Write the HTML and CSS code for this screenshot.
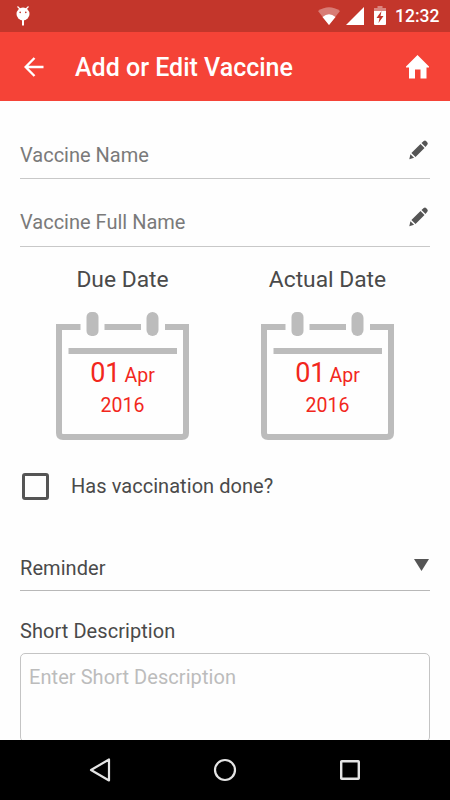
FILE: index.html
```html
<!DOCTYPE html>
<html lang="en">
<head>
<meta charset="utf-8">
<title>Add or Edit Vaccine</title>
<link rel="stylesheet" href="styles.css">
</head>
<body>
<div class="screen">
  <div class="status">
    <svg class="bug" width="14" height="20" viewBox="0 0 14 20" fill="#fff"><path d="M1.500.5 4 3M12.500.5 10 3" stroke="#fff" stroke-width="1.200"/><circle cx="7" cy="8" r="6.500"/><path d="M6 14h2v5.500H6z"/><circle cx="4.200" cy="6.400" r=".8" fill="#c3362b"/><circle cx="9.800" cy="6.400" r=".8" fill="#c3362b"/></svg>
    <svg class="wifi" width="22" height="18" viewBox="0 0 22 18" fill="#fff"><path opacity=".35" d="M0 4Q11-3.500 22 4L11 18Z"/><path d="M4.500 10Q11 4.500 17.500 10L11 18Z"/></svg>
    <svg class="signal" width="18" height="18" viewBox="0 0 18 18" fill="#fff"><path d="M18 0V18H0Z"/></svg>
    <svg class="battery" width="12" height="19" viewBox="0 0 12 19" fill="#fff"><path opacity=".4" d="M3.500 0h5v2H12v3H0V2h3.500z"/><path d="M0 5h12v13q0 1-1 1H1q-1 0-1-1z"/><path d="m7.500 5-5 7h3l-1 5 5-7h-3z" fill="#c3362b"/></svg>
    <span class="clock">12:32</span>
  </div>
  <header class="bar">
    <svg class="back" width="20" height="20" viewBox="0 0 20 20" fill="none" stroke="#fff" stroke-width="2.400"><path d="M19.500 10H2M10.500 1 1.600 10l8.900 9"/></svg>
    <h1 class="title">Add or Edit Vaccine</h1>
    <svg class="home" width="24" height="24" viewBox="0 0 24 24" fill="#fff"><path d="M11.500 0 23 11.500V12.500H20.500V23.500H14.500V14.500H9V23.500H3V12.500H0V11.500Z"/></svg>
  </header>
  <main class="form">
    <div class="field first">
      <span class="label">Vaccine Name</span>
      <svg class="pencil" width="20" height="20" viewBox="0 0 20 20" fill="#555"><path d="M1.300 19.200 2.400 14.300 6.100 17.800ZM3.400 13.100 12.500 4 16.500 8 7.500 17ZM13.500 3 15.700 1.100Q17 0 18.300 1.200L19.200 2.200Q20.300 3.500 19.200 4.800L17.500 6.900Z"/></svg>
    </div>
    <div class="field second">
      <span class="label">Vaccine Full Name</span>
      <svg class="pencil" width="20" height="20" viewBox="0 0 20 20" fill="#555"><path d="M1.300 19.200 2.400 14.300 6.100 17.800ZM3.400 13.100 12.500 4 16.500 8 7.500 17ZM13.500 3 15.700 1.100Q17 0 18.300 1.200L19.200 2.200Q20.300 3.500 19.200 4.800L17.500 6.900Z"/></svg>
    </div>
    <div class="dates">
      <section class="date">
        <h2 class="date-title due">Due Date</h2>
        <div class="calendar">
          <svg class="frame" width="133" height="129" viewBox="0 0 133 129" fill="none" stroke="#bcbcbc" stroke-width="6"><path d="M24.500 16H3V122q0 4 4 4H126q4 0 4-4V16H109M48.500 16H85M12.500 40H121"/><rect x="30.500" y="1" width="12" height="24" rx="5" fill="#bcbcbc" stroke="none"/><rect x="90.500" y="1" width="12" height="24" rx="6" fill="#bcbcbc" stroke="none"/></svg>
          <div class="day"><span class="num">01</span><span class="month">Apr</span></div>
          <div class="year">2016</div>
        </div>
      </section>
      <section class="date">
        <h2 class="date-title actual">Actual Date</h2>
        <div class="calendar">
          <svg class="frame" width="133" height="129" viewBox="0 0 133 129" fill="none" stroke="#bcbcbc" stroke-width="6"><path d="M24.500 16H3V122q0 4 4 4H126q4 0 4-4V16H109M48.500 16H85M12.500 40H121"/><rect x="30.500" y="1" width="12" height="24" rx="5" fill="#bcbcbc" stroke="none"/><rect x="90.500" y="1" width="12" height="24" rx="6" fill="#bcbcbc" stroke="none"/></svg>
          <div class="day"><span class="num">01</span><span class="month">Apr</span></div>
          <div class="year">2016</div>
        </div>
      </section>
    </div>
    <div class="check">
      <span class="box"></span>
      <span class="check-label">Has vaccination done?</span>
    </div>
    <div class="reminder">
      <span class="reminder-label">Reminder</span>
      <svg class="caret" width="15" height="12" viewBox="0 0 15 12" fill="#555"><path d="M0 0h15L7.500 12z"/></svg>
    </div>
    <div class="desc-label"><span class="desc-text">Short Description</span></div>
    <div class="area"><span class="placeholder">Enter Short Description</span></div>
  </main>
  <nav class="nav">
    <svg width="22" height="26" viewBox="0 0 22 26" fill="none" stroke="#e4e4e4" stroke-width="2.200" stroke-linejoin="round"><path d="M20 2.500V23.500L2 13Z"/></svg>
    <svg width="24" height="24" viewBox="0 0 24 24" fill="none" stroke="#e4e4e4" stroke-width="2.200"><circle cx="12" cy="12" r="10"/></svg>
    <svg width="20" height="20" viewBox="0 0 20 20" fill="none" stroke="#e4e4e4" stroke-width="2.400"><rect x="1.200" y="1.200" width="17.600" height="17.600" rx=".5"/></svg>
  </nav>
</div>
</body>
</html>
```

FILE: styles.css
```css
* { box-sizing: border-box; }
body { margin: 0; font-family: Roboto, "Liberation Sans", sans-serif; font-size: 20px; color: #4a4a4a; }
h1, h2 { margin: 0; font-weight: 400; }
svg { display: block; flex: none; }
span, h1, h2 { white-space: nowrap; }
.screen { width: 450px; height: 800px; display: flex; flex-direction: column; overflow: hidden; background: #fefefe; }
.status { height: 32px; flex: none; background: #c3362b; display: flex; align-items: flex-start; padding: 6px 10px 0 16px; }
.wifi { margin: 1px 0 0 288px; }
.signal { margin: 1px 0 0 6px; }
.battery { margin-left: 10px; }
.clock { margin-left: 9px; font-size: 17.500px; line-height: 21px; font-weight: 500; color: #fff; }
.bar { height: 69px; flex: none; background: #f54337; display: flex; align-items: center; padding: 1px 20px 0 24px; }
.title { flex: 1; margin: 1px 0 0 31px; font-size: 25px; line-height: 30px; font-weight: 500; color: #fff; }
.form { flex: 1; min-height: 0; overflow: hidden; padding: 0 20px; display: flex; flex-direction: column; }
.field { flex: none; display: flex; justify-content: space-between; align-items: flex-end; border-bottom: 1px solid #c8c8c8; color: #7a7a7a; line-height: 24px; }
.first { height: 78px; padding-bottom: 11px; }
.second { height: 68px; padding-bottom: 12px; }
.pencil { margin: 0 2px 7px 0; }
.dates { flex: none; display: flex; gap: 0; height: 193px; }
.date { width: 205px; padding-top: 19px; display: flex; flex-direction: column; align-items: center; }
.date-title { font-size: 22.800px; line-height: 28px; }
.calendar { width: 133px; height: 129px; margin-top: 17px; display: grid; }
.frame { grid-area: 1 / 1; }
.day, .year { grid-area: 1 / 1; justify-self: center; align-self: start; color: #f2271c; line-height: 28px; }
.day { margin-top: 48px; display: flex; align-items: baseline; gap: 4px; }
.num { font-size: 27px; }
.month { font-size: 19.500px; }
.year { margin-top: 81px; font-size: 19.500px; }
.check { height: 94px; flex: none; display: flex; align-items: center; gap: 22px; padding-left: 2px; }
.check-label { margin-top: -2px; letter-spacing: .05px; }
.box { width: 27px; height: 27px; margin-top: -1px; border: 3px solid #555; border-radius: 3px; }
.reminder { height: 57px; flex: none; display: flex; justify-content: space-between; align-items: flex-end; padding: 0 1px 10px 0; border-bottom: 1px solid #b8b8b8; line-height: 24px; }
.reminder-label, .desc-text { letter-spacing: .06px; }
.caret { margin-bottom: 9px; }
.desc-label { height: 62px; flex: none; padding-top: 28px; line-height: 24px; }
.area { height: 89px; flex: none; border: 1px solid #c4c4c4; border-radius: 5px; padding: 11px 8px; line-height: 24px; letter-spacing: .06px; color: #bcbcbc; }
.nav { height: 60px; flex: none; background: #000; display: grid; grid-template-columns: repeat(3, 125px); justify-content: center; justify-items: center; align-items: center; }
```
